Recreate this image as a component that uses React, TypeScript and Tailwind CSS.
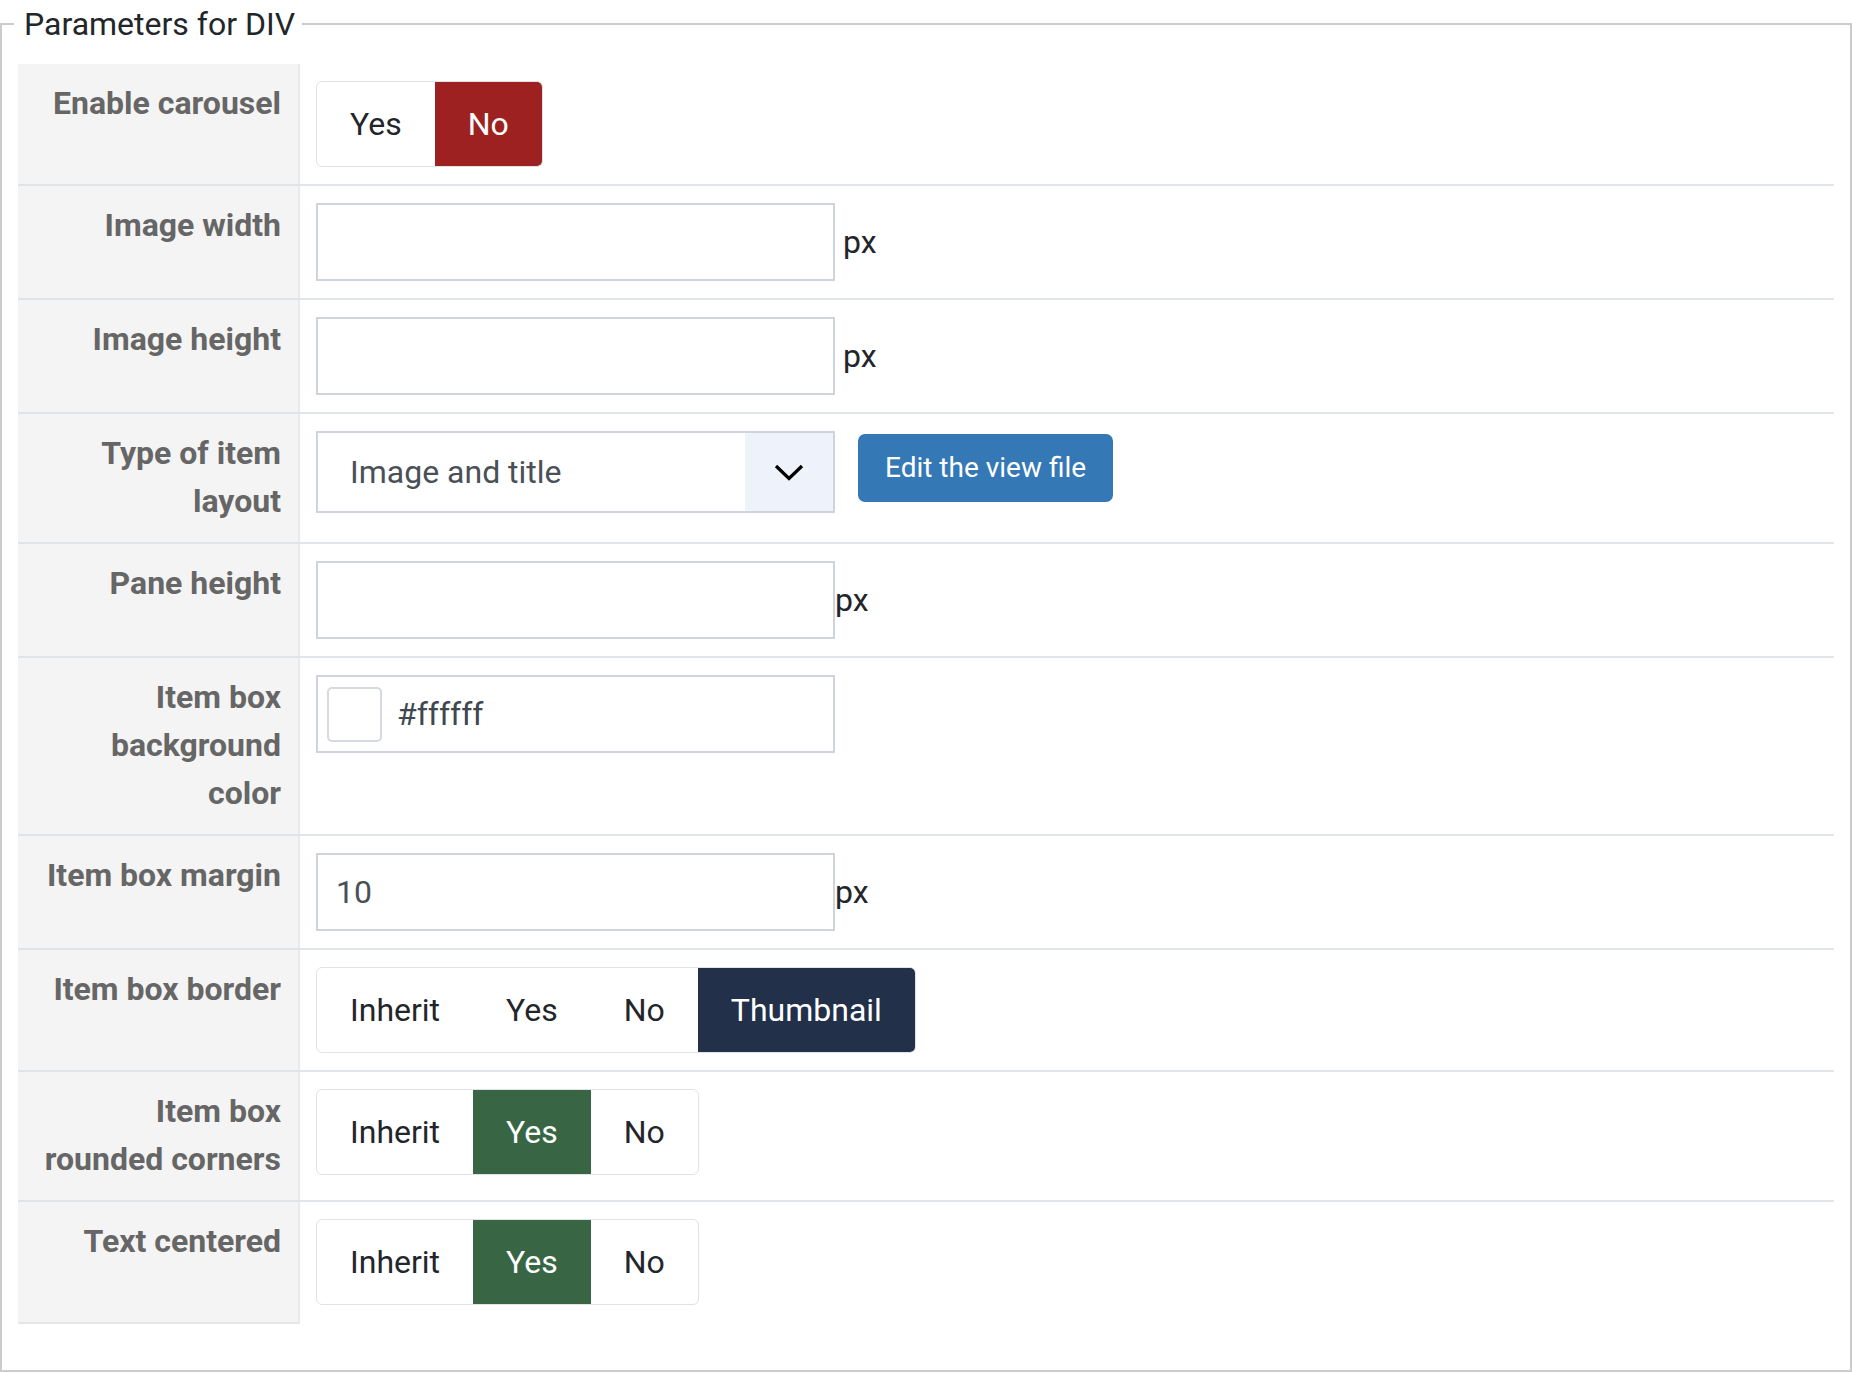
import type { ReactNode } from "react";

type RowProps = {
	label: string;
	first?: boolean;
	last?: boolean;
	children: ReactNode;
};

function Row({ label, first, last, children }: RowProps) {
	return (
		<div className={`flex ${first ? "" : "border-t-2 border-[#e1e4e8]"}`}>
			<div
				className={`w-[282px] shrink-0 border-r-2 border-r-[#e9e9e9] bg-[#f4f4f4] pb-[17px] pl-[22px] pr-[17px] pt-[15px] text-right text-[32px] font-bold leading-[48px] text-[#666666] ${last ? "border-b-2 border-b-[#e6e6e6]" : ""}`}
			>
				{label}
			</div>
			<div className={`flex flex-1 items-start bg-white pl-[16px] pt-[17px] ${last ? "pb-[19px]" : "pb-[17px]"}`}>{children}</div>
		</div>
	);
}

type SwitcherProps = {
	options: string[];
	active: number;
	activeClass: string;
};

function Switcher({ options, active, activeClass }: SwitcherProps) {
	return (
		<div className="flex overflow-hidden rounded-[6px] border border-[#dfe3e7] bg-white">
			{options.map((opt, i) => (
				<div
					key={opt}
					className={`px-[33px] py-[18px] text-[32px] leading-[48px] ${i === active ? `${activeClass} text-white` : "text-[#22262a]"}`}
				>
					{opt}
				</div>
			))}
		</div>
	);
}

function TextBox({ value, unit, gap }: { value?: string; unit?: boolean; gap?: boolean }) {
	return (
		<div className="flex items-center">
			<div className="flex h-[78px] w-[519px] items-center border-2 border-[#ced4da] bg-white pl-[18px] text-[32px] leading-[48px] text-[#495057]">
				{value}
			</div>
			{unit && <span className={`text-[32px] leading-[48px] text-[#22262a] ${gap ? "ml-[8px]" : ""}`}>px</span>}
		</div>
	);
}

export default function App() {
	return (
		<div className="bg-white font-[family-name:Roboto,'Liberation_Sans',sans-serif]">
			<fieldset className="border-2 border-[#cccccc] px-4 pb-[46px] pt-4">
				<legend className="ml-[-4px] pl-[10px] pr-[7px] text-[32px] leading-[48px] text-[#22262a]">Parameters for DIV</legend>

				<div className="flex flex-col">
					<Row label="Enable carousel" first>
						<Switcher options={["Yes", "No"]} active={1} activeClass="bg-[#9d2121]" />
					</Row>

					<Row label="Image width">
						<TextBox unit gap />
					</Row>

					<Row label="Image height">
						<TextBox unit gap />
					</Row>

					<Row label="Type of item layout">
						<div className="flex h-[82px] w-[519px] border-2 border-[#ced4da] bg-white">
							<div className="flex flex-1 items-center pl-[32px] text-[32px] leading-[48px] text-[#495057]">Image and title</div>
							<div className="flex w-[88px] items-center justify-center bg-[#eef3fb]">
								<svg width="30" height="19" viewBox="0 0 30 19" fill="none">
									<path d="M2 3 L15 15.5 L28 3" stroke="#000000" strokeWidth="3.2" />
								</svg>
							</div>
						</div>
						<button
							type="button"
							className="ml-[23px] mt-[3px] rounded-[7px] bg-[#3578b6] px-[27px] py-[13px] text-[28px] leading-[42px] text-white"
						>
							Edit the view file
						</button>
					</Row>

					<Row label="Pane height">
						<TextBox unit />
					</Row>

					<Row label="Item box background color">
						<div className="flex h-[78px] w-[519px] items-center border-2 border-[#ced4da] bg-white pl-[9px]">
							<div className="h-[55px] w-[55px] rounded-[5px] border-2 border-[#d6d9dd] bg-white" />
							<span className="ml-[15px] text-[32px] leading-[48px] text-[#3f4750]">#ffffff</span>
						</div>
					</Row>

					<Row label="Item box margin">
						<TextBox value="10" unit />
					</Row>

					<Row label="Item box border">
						<Switcher options={["Inherit", "Yes", "No", "Thumbnail"]} active={3} activeClass="bg-[#223049]" />
					</Row>

					<Row label="Item box rounded corners">
						<Switcher options={["Inherit", "Yes", "No"]} active={1} activeClass="bg-[#386645]" />
					</Row>

					<Row label="Text centered" last>
						<Switcher options={["Inherit", "Yes", "No"]} active={1} activeClass="bg-[#386645]" />
					</Row>
				</div>
			</fieldset>
		</div>
	);
}
